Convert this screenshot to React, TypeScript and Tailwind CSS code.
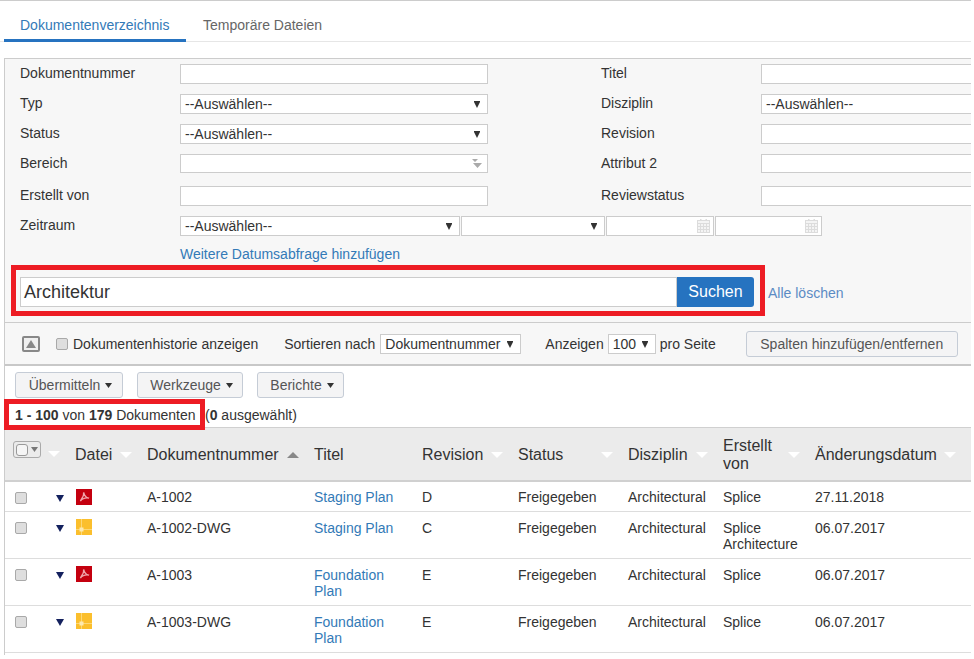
const sans = 'font-["Liberation_Sans",Arial,sans-serif]';

function Caret({ className = 'text-[#333]' }: { className?: string }) {
  return (
    <svg width="7" height="5" viewBox="0 0 7 5" className={`shrink-0 ${className}`}>
      <path d="M0 0h7L3.5 5z" fill="currentColor" />
    </svg>
  );
}

function SelectCaret() {
  return (
    <svg width="6" height="7" viewBox="0 0 6 7" className="shrink-0 text-[#333]">
      <path d="M0 0h6v1L3 7 0 1z" fill="currentColor" />
    </svg>
  );
}

function RowArrow() {
  return (
    <svg width="8" height="7" viewBox="0 0 8 7" className="block text-[#14215e]">
      <path d="M0 0h8L4 7z" fill="currentColor" />
    </svg>
  );
}

function HeadCaret({ up }: { up?: boolean }) {
  return (
    <svg width="12" height="6" viewBox="0 0 12 6" className={`block shrink-0 ${up ? 'text-[#888]' : 'text-white'}`}>
      <path d={up ? 'M0 6h12L6 0z' : 'M0 0h12L6 6z'} fill="currentColor" />
    </svg>
  );
}

function PdfIcon() {
  return (
    <svg width="16" height="16" viewBox="0 0 16 16" className="block shrink-0">
      <rect width="16" height="16" fill="#c4000f" />
      <path
        d="M7.600 3.400c.6 2.200 1.400 4 3 5 .9.4 1.900.4 2.400.7-1-.2-3.800-.3-5.600.5-1.300.5-2.300 1.500-3 2.500.5-1.300 1.500-2.800 2.500-4.500.5-1 .8-2.700.7-4.200z"
        fill="none"
        stroke="#f0a6ac"
        strokeWidth="1.300"
      />
    </svg>
  );
}

function DwgIcon() {
  return (
    <svg width="16" height="16" viewBox="0 0 16 16" className="block shrink-0">
      <rect width="16" height="16" fill="#fbbf2d" />
      <path d="M5.500 0v16M0 10.500h16" stroke="#fdd877" strokeWidth="1" />
      <rect x="3.500" y="8.500" width="4" height="4" fill="#fde9b0" />
    </svg>
  );
}

function CalendarIcon() {
  return (
    <svg width="13" height="14" viewBox="0 0 13 14" className="shrink-0">
      <path d="M3 0h1.500v2H3zM8.500 0H10v2H8.500z" fill="#dcdcdc" />
      <rect x="0.500" y="1.500" width="12" height="12" fill="#f4f4f4" stroke="#dcdcdc" />
      <path d="M0 4.500h13M0 7.500h13M0 10.500h13M3.500 4v10M6.500 4v10M9.500 4v10" stroke="#dcdcdc" />
    </svg>
  );
}

function TextBox({ className = 'w-[308px]' }: { className?: string }) {
  return <div className={`h-full bg-white border border-[#ccc] ${className}`} />;
}

function SelectBox({ text = '--Auswählen--', className = 'w-[308px]', caret = true }: { text?: string; className?: string; caret?: boolean }) {
  return (
    <div className={`h-full bg-white border border-[#ccc] flex items-center justify-between pl-1 pr-[7px] text-[14px] text-[#333] ${className}`}>
      <span>{text}</span>
      {caret && <SelectCaret />}
    </div>
  );
}

function FormRow({ label, right, left, rightControl, className = 'h-5 mb-2.5' }: {
  label: string;
  right: string;
  left: React.ReactNode;
  rightControl: React.ReactNode;
  className?: string;
}) {
  return (
    <div className={`flex items-stretch ${className}`}>
      <label className="w-[160px] shrink-0 leading-[18px]">{label}</label>
      <div className="w-[308px] shrink-0">{left}</div>
      <label className="ml-[113px] w-[160px] shrink-0 leading-[18px]">{right}</label>
      <div className="w-[300px] shrink-0">{rightControl}</div>
    </div>
  );
}

function GrayButton({ children, className = '' }: { children: React.ReactNode; className?: string }) {
  return (
    <button type="button" className={`w-full h-[26px] flex items-center justify-center gap-[5px] rounded-[3px] border border-[#c5ccd6] bg-[#f4f4f5] text-[14px] text-[#555] whitespace-nowrap ${className}`}>
      {children}
    </button>
  );
}

function CheckBox() {
  return <span className="block w-3 h-3 rounded-[2px] border border-[#a9a9a9] bg-[#dedede]" />;
}

function Th({ children, caret = true, up, tight }: { children?: React.ReactNode; caret?: boolean; up?: boolean; tight?: boolean }) {
  return (
    <th className="pl-2 pr-0 pt-[2px] text-left font-normal align-middle text-[16px] leading-[18px] text-[#333]">
      <div className={`flex items-center pr-[7px] ${tight ? 'gap-[7px]' : 'justify-between'}`}>
        <span>{children}</span>
        {caret && <HeadCaret up={up} />}
      </div>
    </th>
  );
}

const rows = [
  { icon: 'pdf', no: 'A-1002', title: 'Staging Plan', rev: 'D', by: 'Splice', date: '27.11.2018', h: 'h-[31px]', pad: 'pt-[7px]' },
  { icon: 'dwg', no: 'A-1002-DWG', title: 'Staging Plan', rev: 'C', by: 'Splice Architecture', date: '06.07.2017', h: 'h-[47px]', pad: 'pt-[8px]' },
  { icon: 'pdf', no: 'A-1003', title: 'Foundation Plan', rev: 'E', by: 'Splice', date: '06.07.2017', h: 'h-[47px]', pad: 'pt-[8px]' },
  { icon: 'dwg', no: 'A-1003-DWG', title: 'Foundation Plan', rev: 'E', by: 'Splice', date: '06.07.2017', h: 'h-[47px]', pad: 'pt-[8px]' },
];

export default function App() {
  return (
    <div className={`w-[974px] h-[659px] overflow-hidden bg-white text-[14px] text-[#333] ${sans}`}>
      <div className="w-[971px] overflow-hidden border-t border-[#ccc]">
        {/* Tabs */}
        <div className="h-[41px] flex items-stretch pl-1 border-b border-[#e6e6e6]">
          <div className="w-[182px] h-[41px] pt-[16px] pl-4 border-b-[3px] border-[#2673c0] text-[#337ab7] leading-[17px]">Dokumentenverzeichnis</div>
          <div className="pt-[16px] pl-[17px] text-[#666] leading-[17px]">Temporäre Dateien</div>
        </div>

        <div className="ml-1 mt-4 border-l border-[#ccc] h-[597px]">
          {/* Filters */}
          <div className="bg-[#f7f7f7] border-t border-[#ccc] pt-[5px] pl-[15px]">
            <FormRow label="Dokumentnummer" right="Titel" left={<TextBox />} rightControl={<TextBox className="w-[300px]" />} />
            <FormRow label="Typ" right="Disziplin" left={<SelectBox />} rightControl={<SelectBox className="w-[300px]" caret={false} />} />
            <FormRow label="Status" right="Revision" left={<SelectBox />} rightControl={<TextBox className="w-[300px]" />} />
            <FormRow
              label="Bereich"
              right="Attribut 2"
              className="h-[19px] mb-[13px]"
              left={
                <div className="h-full bg-white border border-[#ccc] flex items-center justify-end pr-[5px]">
                  <svg width="10" height="9" viewBox="0 0 10 9">
                    <path d="M0 0h6L3 3zM1 4h9L5.500 9z" fill="#aaa" />
                  </svg>
                </div>
              }
              rightControl={<TextBox className="w-[300px]" />}
            />
            <FormRow label="Erstellt von" right="Reviewstatus" left={<TextBox />} rightControl={<TextBox className="w-[300px]" />} />
            <div className="flex items-stretch h-5">
              <label className="w-[160px] shrink-0 leading-[18px]">Zeitraum</label>
              <SelectBox className="w-[280px] shrink-0" />
              <SelectBox text="" className="w-[144px] shrink-0 ml-px" />
              <div className="w-[108px] shrink-0 ml-px bg-white border border-[#ccc] flex items-center justify-end pr-[3px]"><CalendarIcon /></div>
              <div className="w-[107px] shrink-0 ml-px bg-white border border-[#ccc] flex items-center justify-end pr-[3px]"><CalendarIcon /></div>
            </div>
            <div className="pl-[160px] mt-[10px] h-[17px] leading-[17px] text-[#337ab7]">Weitere Datumsabfrage hinzufügen</div>

            {/* Search */}
            <div className="flex items-center -ml-[9px] mt-[2px] h-[51px]">
              <div className="w-[754px] h-[51px] border-[5px] border-[#ed1c24] pl-1 pr-[6px] pt-[7px]">
                <div className="flex h-[30px]">
                  <div className="flex-1 bg-white border border-[#ccc] pl-[3px] text-[18px] leading-[28px] text-[#333]">Architektur</div>
                  <button type="button" className="w-[77px] rounded-r-[3px] bg-[#2673c0] text-white text-[16px]">Suchen</button>
                </div>
              </div>
              <a className="ml-[3px] mt-[6px] text-[#5b8bc4]">Alle löschen</a>
            </div>
            <div className="h-[6px]" />
          </div>

          {/* Toolbar */}
          <div className="h-[44px] bg-[#f7f7f7] border-t border-[#ccc] border-b-2 border-b-[#c8c8c8] flex items-center pl-[17px] pt-[1px]">
            <span className="w-[18px] h-4 rounded-[2px] border-2 border-[#888] bg-[#f0f0f0] flex items-center justify-center">
              <svg width="10" height="8" viewBox="0 0 10 8"><path d="M0 8h10L5 0z" fill="#888" /></svg>
            </span>
            <span className="ml-4"><CheckBox /></span>
            <span className="ml-[5px]">Dokumentenhistorie anzeigen</span>
            <span className="ml-[26px]">Sortieren nach</span>
            <div className="ml-[5px] w-[141px] h-5"><SelectBox text="Dokumentnummer" className="w-full" /></div>
            <span className="ml-[24px]">Anzeigen</span>
            <div className="ml-[4px] w-[48px] h-5"><SelectBox text="100" className="w-full" /></div>
            <span className="ml-[4px]">pro Seite</span>
            <div className="ml-[30px] w-[212px]">
              <GrayButton>Spalten hinzufügen/entfernen</GrayButton>
            </div>
          </div>

          {/* Actions */}
          <div className="flex gap-[14px] pl-[10px] pt-[6px] h-[33px]">
            <div className="w-[108px]"><GrayButton className="pl-[3px]"><span>Übermitteln</span><Caret /></GrayButton></div>
            <div className="w-[106px]"><GrayButton className="pl-[3px]"><span>Werkzeuge</span><Caret /></GrayButton></div>
            <div className="w-[87px]"><GrayButton className="pl-[3px]"><span>Berichte</span><Caret /></GrayButton></div>
          </div>

          {/* Result count */}
          <div className="relative h-[31px] flex items-center pl-[10px] text-[14px]">
            <div className="w-[201px] h-[31px] -ml-[11px] border-[5px] border-[#ed1c24] flex items-center pl-[6px] pt-[1px] bg-white z-10 whitespace-nowrap">
              <span><b>1 - 100</b> von <b>179</b> Dokumenten</span>
            </div>
            <span className="pt-[1px]">(<b>0</b> ausgewählt)</span>
          </div>

          {/* Table */}
          <table className="w-[966px] table-fixed border-collapse text-[14px] -mt-[3px]">
            <colgroup>
              <col className="w-[39px]" />
              <col className="w-[23px]" />
              <col className="w-[72px]" />
              <col className="w-[167px]" />
              <col className="w-[108px]" />
              <col className="w-[96px]" />
              <col className="w-[110px]" />
              <col className="w-[95px]" />
              <col className="w-[92px]" />
              <col className="w-[164px]" />
            </colgroup>
            <thead>
              <tr className="h-[53px] bg-[#ebebeb] border-t border-b-2 border-[#d0d0d0]">
                <th className="pl-2 text-left align-middle">
                  <span className="flex items-center gap-[3px] w-[28px] h-[17px] -mt-2 rounded-[3px] border border-[#aaa] pl-[2px]">
                    <span className="block w-[12px] h-[12px] rounded-[3px] border border-[#999] bg-[#f5f5f5]" />
                    <Caret className="text-[#777]" />
                  </span>
                </th>
                <th className="pl-1 align-middle"><HeadCaret /></th>
                <Th>Datei</Th>
                <Th up>Dokumentnummer</Th>
                <Th caret={false}>Titel</Th>
                <Th>Revision</Th>
                <Th>Status</Th>
                <Th>Disziplin</Th>
                <Th>Erstellt von</Th>
                <Th tight>Änderungsdatum</Th>
              </tr>
            </thead>
            <tbody>
              {rows.map(r => (
                <tr key={r.no} className={`${r.h} border-b border-[#ddd] align-top`}>
                  <td className="pl-[10px] pt-[10px]"><CheckBox /></td>
                  <td className="pl-[12px] pt-[13px]"><RowArrow /></td>
                  <td className="pl-[9px] pt-[7px]">{r.icon === 'pdf' ? <PdfIcon /> : <DwgIcon />}</td>
                  <td className={`pl-2 leading-[16px] ${r.pad}`}>{r.no}</td>
                  <td className={`pl-2 leading-[16px] text-[#337ab7] ${r.pad}`}>{r.title}</td>
                  <td className={`pl-2 leading-[16px] ${r.pad}`}>{r.rev}</td>
                  <td className={`pl-2 leading-[16px] ${r.pad}`}>Freigegeben</td>
                  <td className={`pl-2 leading-[16px] ${r.pad}`}>Architectural</td>
                  <td className={`pl-2 leading-[16px] ${r.pad}`}>{r.by}</td>
                  <td className={`pl-2 leading-[16px] ${r.pad}`}>{r.date}</td>
                </tr>
              ))}
            </tbody>
          </table>
        </div>
      </div>
    </div>
  );
}
